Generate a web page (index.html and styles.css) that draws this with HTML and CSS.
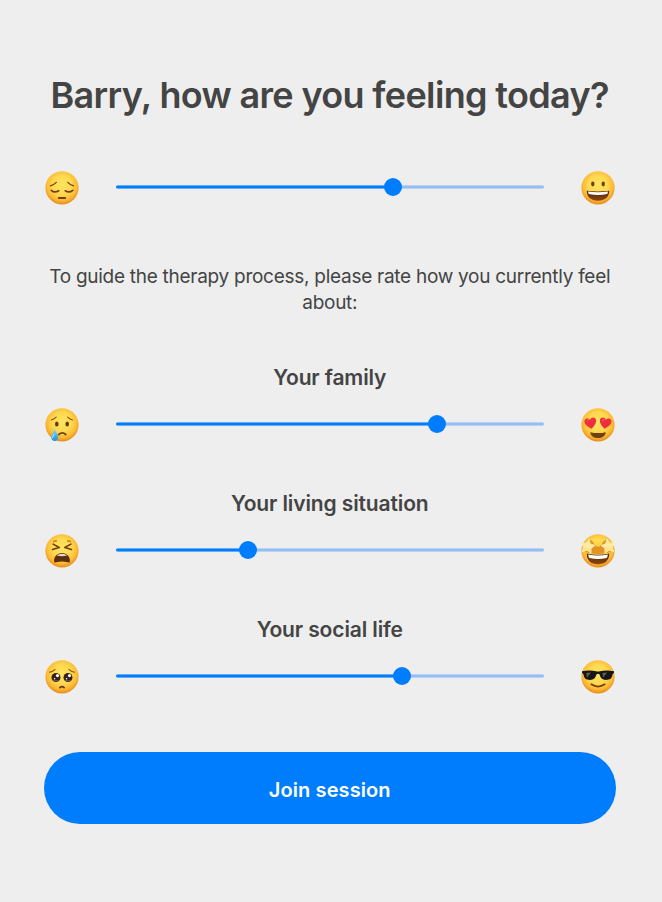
FILE: index.html
```html
<!DOCTYPE html>
<html lang="en">
<head>
<meta charset="utf-8">
<title>How are you feeling today?</title>
<link rel="stylesheet" href="styles.css">
</head>
<body>
<svg class="defs" width="0" height="0" aria-hidden="true">
  <defs>
    <radialGradient id="skin" cx="50%" cy="42%" r="58%">
      <stop offset="0" stop-color="#ffe560"/>
      <stop offset=".5" stop-color="#ffd850"/>
      <stop offset=".78" stop-color="#fcbb35"/>
      <stop offset="1" stop-color="#ea8a1c"/>
    </radialGradient>
    <linearGradient id="mouth" x1="0" y1="0" x2="0" y2="1">
      <stop offset="0" stop-color="#4f230b"/>
      <stop offset="1" stop-color="#8a4a10"/>
    </linearGradient>
    <linearGradient id="star" x1="0" y1="0" x2="0" y2="1">
      <stop offset="0" stop-color="#fff2b0"/>
      <stop offset=".6" stop-color="#ffe99f"/>
      <stop offset="1" stop-color="#ffdc70"/>
    </linearGradient>
    <linearGradient id="tear" x1="0" y1="0" x2="0" y2="1">
      <stop offset="0" stop-color="#8fdcf8"/>
      <stop offset="1" stop-color="#1593d6"/>
    </linearGradient>
    <circle id="face" cx="22" cy="22.8" r="16.6" fill="url(#skin)"/>
    <path id="heart" d="M0 5.4C-3 3.2-5.4.8-5.2-2C-5-4.7-1.4-5.2 0-2.6C1.4-5.2 5-4.7 5.2-2C5.4.8 3 3.2 0 5.4Z" fill="#f02d3f"/>
    <path id="starshape" d="M0-7.2L2.3-2.8L7.1-2.2L3.6 1.3L4.5 6.2L0 3.9L-4.5 6.2L-3.6 1.3L-7.1-2.2L-2.3-2.8Z" fill="url(#star)" stroke="#ffecaa" stroke-width=".8" stroke-linejoin="round"/>
  </defs>
</svg>
<main class="checkin">
  <h1 class="title">Barry, how are you feeling today?</h1>

  <div class="scale">
    <svg class="emoji" viewBox="4 4 36 36">
      <use href="#face"/>
      <g fill="none" stroke="#774010" stroke-linecap="round">
        <path d="M10.3 20.8Q13.8 19.9 16.3 17.3M33.7 20.8Q30.2 19.9 27.7 17.3" stroke-width="1.2"/>
        <path d="M11.2 25.3Q14.7 28.3 18.7 25.8M32.8 25.3Q29.3 28.3 25.3 25.8" stroke-width="1.7"/>
        <path d="M18.8 33H25.2" stroke-width="2"/>
      </g>
    </svg>
    <div class="slider"><div class="fill" style="width:64.9%"></div><div class="rest"></div></div>
    <svg class="emoji" viewBox="4 4 36 36">
      <use href="#face"/>
      <ellipse cx="16.8" cy="19" rx="1.7" ry="2.4" fill="#71400e"/>
      <ellipse cx="27.2" cy="19" rx="1.7" ry="2.4" fill="#71400e"/>
      <path d="M10.8 25.7Q22 27.2 33.2 25.7C33.5 31.5 29.1 35.7 22 35.7S10.5 31.5 10.8 25.7Z" fill="url(#mouth)"/>
      <path d="M12 26.5Q22 27.8 32 26.5Q31.8 28 31.2 29Q22 30.8 12.8 29Q12.2 28 12 26.5Z" fill="#fff"/>
    </svg>
  </div>

  <p class="intro">To guide the therapy process, please rate how you currently feel about:</p>

  <section class="question">
    <h2 class="label">Your family</h2>
    <div class="scale">
      <svg class="emoji" viewBox="4 4 36 36">
        <use href="#face"/>
        <path d="M11.3 18Q13.5 17.6 16.2 15.2M32.5 18Q30.3 17.6 27.6 15.2" fill="none" stroke="#8b4b0d" stroke-width="1.1" stroke-linecap="round"/>
        <ellipse cx="16.8" cy="22" rx="1.8" ry="2.5" fill="#653812"/>
        <ellipse cx="27.2" cy="22" rx="1.8" ry="2.5" fill="#653812"/>
        <path d="M18.9 32.5Q22.3 29.2 25.7 32.5" fill="none" stroke="#71400e" stroke-width="1.8" stroke-linecap="round"/>
        <path d="M14.5 26.3C15.1 29.5 18.3 32 18.3 35.1C18.3 37.6 16.8 39.1 14.7 39.1C12.4 39.1 11 37.4 11.2 35.1C11.4 32.2 14.1 29.8 14.5 26.3Z" fill="url(#tear)"/>
        <path d="M14.3 31.8C13.4 33.2 12.3 34.8 12.7 36.2" fill="none" stroke="#c5f1ff" stroke-width="1"/>
      </svg>
      <div class="slider"><div class="fill" style="width:75%"></div><div class="rest"></div></div>
      <svg class="emoji" viewBox="4 4 36 36">
        <use href="#face"/>
        <use href="#heart" transform="translate(14.6 20.9) rotate(-9) scale(1.12)"/>
        <use href="#heart" transform="translate(29.4 20.9) rotate(9) scale(1.12)"/>
        <path d="M11.5 18.6Q12 17.1 13.1 17.5M26.5 18.6Q27 17.1 28.1 17.5" fill="none" stroke="#ff7880" stroke-width=".9" stroke-linecap="round"/>
        <path d="M14.2 30.2Q22 32 29.8 30.2C29.4 34 26.2 36 22 36S14.6 34 14.2 30.2Z" fill="#70410b"/>
      </svg>
    </div>
  </section>

  <section class="question">
    <h2 class="label">Your living situation</h2>
    <div class="scale">
      <svg class="emoji" viewBox="4 4 36 36">
        <use href="#face"/>
        <g fill="none" stroke="#70400d" stroke-linecap="round" stroke-linejoin="round">
          <path d="M13.3 13.8Q14.3 12.4 16.5 13M30.7 13.8Q29.7 12.4 27.5 13" stroke-width=".9"/>
          <path d="M13.1 16.1L19.2 19.5L12.5 21.6M30.9 16.1L24.8 19.5L31.5 21.6" stroke-width="1.6"/>
        </g>
        <path d="M14.2 33.7C13.4 28.5 17.4 24.9 22 24.9S30.6 28.5 29.8 33.7C29.5 35.7 27.3 33.6 22 33.6S14.5 35.7 14.2 33.7Z" fill="#5b3011"/>
        <path d="M16.7 27.6Q22 23.7 27.3 27.6Q22 28.7 16.7 27.6Z" fill="#e8d9cc"/>
      </svg>
      <div class="slider"><div class="fill" style="width:30.8%"></div><div class="rest"></div></div>
      <svg class="emoji" viewBox="4 4 36 36">
        <use href="#face"/>
        <path d="M11 12.5Q16 10.5 18.5 16.5L20.5 17.5Q22 15.5 23.5 17.5L25.5 16.5Q28 10.5 33 12.5L35 24Q22 28 9 24Z" fill="#e39322"/>
        <path d="M19.5 14.5Q22 12.8 24.5 14.5L23.7 19Q22 17.7 20.3 19Z" fill="#ffd44c"/>
        <path d="M10.8 25.5Q22 28 33.2 25.5C33.4 32.2 29.1 36.3 22 36.3S10.6 32.2 10.8 25.5Z" fill="url(#mouth)"/>
        <path d="M12.1 26.5Q22 28.7 31.9 26.5Q31.6 28.9 30.6 30.1Q22 31.8 13.4 30.1Q12.4 28.9 12.1 26.5Z" fill="#fff"/>
        <use href="#starshape" transform="translate(11.7 18.4) rotate(10)"/>
        <use href="#starshape" transform="translate(32.3 18.4) rotate(-10)"/>
      </svg>
    </div>
  </section>

  <section class="question">
    <h2 class="label">Your social life</h2>
    <div class="scale">
      <svg class="emoji" viewBox="4 4 36 36">
        <use href="#face"/>
        <path d="M9.4 18.2Q12.7 17.8 15.1 15.3M34.6 18.2Q31.3 17.8 28.9 15.3" fill="none" stroke="#9c560e" stroke-width="1.1" stroke-linecap="round"/>
        <circle cx="16" cy="23.5" r="4.5" fill="#352019"/>
        <circle cx="28" cy="23.5" r="4.5" fill="#352019"/>
        <g fill="#fff">
          <circle cx="17.5" cy="21.6" r="1.6"/><circle cx="29.5" cy="21.6" r="1.6"/>
          <circle cx="14.6" cy="24.7" r=".8"/><circle cx="26.6" cy="24.7" r=".8"/>
        </g>
        <path d="M13.3 26.2Q16 28 18.7 26.2M25.3 26.2Q28 28 30.7 26.2" fill="none" stroke="#8d8580" stroke-width=".7"/>
        <path d="M19.9 33.6Q22 31.6 24.1 33.6" fill="none" stroke="#6b3511" stroke-width="1.7" stroke-linecap="round"/>
      </svg>
      <div class="slider"><div class="fill" style="width:67%"></div><div class="rest"></div></div>
      <svg class="emoji" viewBox="4 4 36 36">
        <use href="#face"/>
        <path d="M6 17.3Q14 15.7 20 17.3Q22 17.8 24 17.3Q30 15.7 38 17.3V19Q36.8 19.2 36.5 20.6C35.8 24.4 34.2 26 30 26C26 26 24.6 24.1 23.6 20.6Q22 18.9 20.4 20.6C19.4 24.1 18 26 14 26C9.8 26 8.2 24.4 7.5 20.6Q7.2 19.2 6 19Z" fill="#181716"/>
        <path d="M10.3 19L14.9 18.5L11 23.4ZM26.5 19L31.1 18.5L27.2 23.4Z" fill="#62605d"/>
        <path d="M15.3 30.3Q22 34.9 28.7 30.3" fill="none" stroke="#71400e" stroke-width="1.7" stroke-linecap="round"/>
      </svg>
    </div>
  </section>

  <button class="join" type="button">Join session</button>
</main>
</body>
</html>
```
FILE: styles.css
```css
* { box-sizing: border-box; }
body {
  margin: 0;
  min-height: 902px;
  background: #eee;
  color: #444;
  font-family: "Inter", "Liberation Sans", sans-serif;
}
.defs { display: block; height: 0; }
.checkin {
  display: flex;
  flex-direction: column;
  width: 659.5px;
  padding: 73px 44px 0;
  text-align: center;
}
.title {
  margin: 0 -20px 52px;
  font-size: 36px;
  font-weight: 600;
  line-height: 44px;
  letter-spacing: -0.65px;
  white-space: nowrap;
}
.scale {
  display: flex;
  align-items: center;
  gap: 36px;
  height: 36px;
}
.emoji {
  flex: none;
  width: 36px;
  height: 36px;
  overflow: visible;
}
.slider {
  display: flex;
  align-items: center;
  flex: 1;
}
.fill {
  display: flex;
  align-items: center;
  justify-content: flex-end;
  z-index: 1;
  height: 4px;
  border-radius: 2px;
  background: linear-gradient(#62adf8 1px, #007dfc 1px 3px, #62adf8 3px);
}
.fill::after {
  content: "";
  flex: none;
  width: 18px;
  height: 18px;
  margin-right: -9px;
  border-radius: 50%;
  background: #007dfc;
}
.rest {
  flex: 1;
  height: 4px;
  border-radius: 0 2px 2px 0;
  background: linear-gradient(#b9d1f2 1px, #96bef4 1px 3px, #b9d1f2 3px);
}
.intro {
  margin: 59px -5px 48px;
  font-size: 19px;
  line-height: 26px;
  letter-spacing: -0.27px;
}
.question { margin-bottom: 48px; }
.label {
  margin: 0 0 15px;
  font-size: 21px;
  font-weight: 600;
  line-height: 27px;
  letter-spacing: -0.12px;
}
.join {
  height: 72px;
  margin-top: 10px;
  padding: 4px 0 0;
  border: 0;
  border-radius: 36px;
  background: #007dfc;
  color: #fff;
  font: 600 20px/26px "Inter", "Liberation Sans", sans-serif;
  letter-spacing: 0.1px;
}
```
